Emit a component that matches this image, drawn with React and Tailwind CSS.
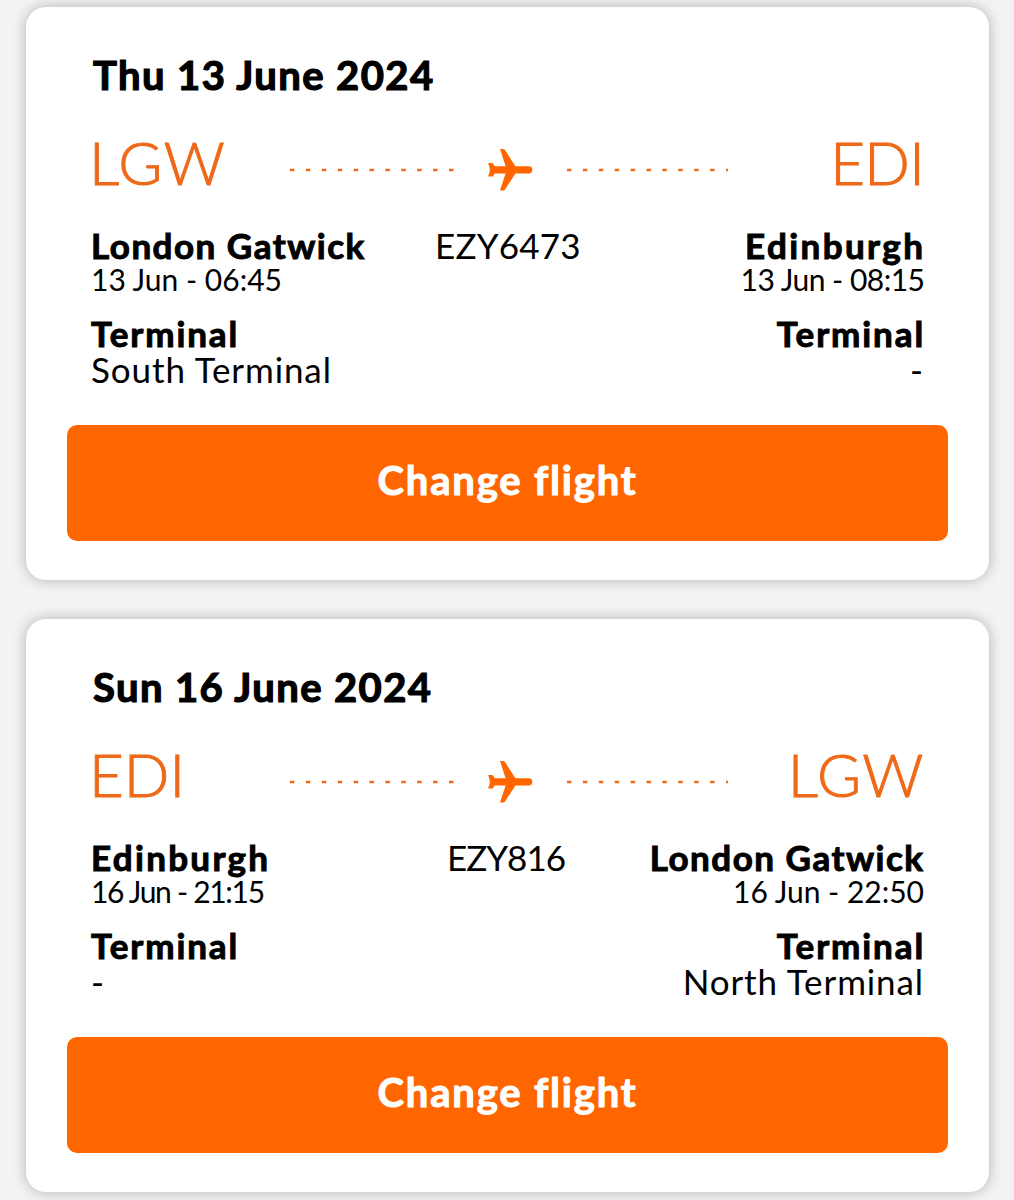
import React from 'react';

const flights = [
  {
    date: 'Thu 13 June 2024',
    number: 'EZY6473',
    numberClass: 'tracking-[0.2px]',
    from: {
      code: 'LGW',
      codeClass: 'tracking-[1.5px]',
      city: 'London Gatwick',
      cityClass: 'tracking-[1.5px] -mr-[1.5px]',
      time: '13 Jun - 06:45',
      timeClass: 'tracking-normal',
      terminal: 'South Terminal',
    },
    to: {
      code: 'EDI',
      codeClass: 'tracking-[-0.8px]',
      city: 'Edinburgh',
      cityClass: 'tracking-[2.4px] -mr-[1.4px]',
      time: '13 Jun - 08:15',
      timeClass: 'tracking-[-0.5px] -mr-[0.5px]',
      terminal: '-',
    },
  },
  {
    date: 'Sun 16 June 2024',
    number: 'EZY816',
    numberClass: 'tracking-[-1px] -ml-[3px]',
    from: {
      code: 'EDI',
      codeClass: 'tracking-normal',
      city: 'Edinburgh',
      cityClass: 'tracking-[2.3px]',
      time: '16 Jun - 21:15',
      timeClass: 'tracking-[-1.3px]',
      terminal: '-',
    },
    to: {
      code: 'LGW',
      codeClass: 'tracking-[1.3px] -mr-[0.5px]',
      city: 'London Gatwick',
      cityClass: 'tracking-[1.5px] -mr-[0.5px]',
      time: '16 Jun - 22:50',
      timeClass: 'tracking-normal',
      terminal: 'North Terminal',
    },
  },
];

function Dashes({ width }) {
  return (
    <svg width={width} height="4" viewBox={`0 0 ${width} 4`} className="shrink-0">
      <line x1="0" y1="2" x2={width} y2="2" stroke="#ee6a18" strokeWidth="2.6" strokeDasharray="4.4 11.5" />
    </svg>
  );
}

function Plane() {
  return (
    <svg width="45" height="42" viewBox="0 0 45 42" fill="#ff6600" className="mr-[34px] ml-[33px] shrink-0">
      <path d="M12 0H15.4Q16.4 0 17 1L27.4 17.2H40.7A3.6 3.6 0 0 1 40.7 24.5H27.4L17 40.6Q16.4 41.6 15.4 41.6H12L17.6 24.5H7.2C5.8 24.6 5.6 27.6 4.2 27.6H.3C.3 25.6 1.8 24.6 1.8 20.8C1.8 17 .3 16 .3 14H4.2C5.6 14 5.8 17.1 7.2 17.2H17.6Z" />
    </svg>
  );
}

function Stop({ stop, right }) {
  return (
    <div className={right ? 'text-right' : 'text-left'}>
      <p className={`text-[35px] leading-9 font-bold [-webkit-text-stroke:1px_black] ${stop.cityClass}`}>{stop.city}</p>
      <p className={`text-[30px] leading-8 ${stop.timeClass}`}>{stop.time}</p>
      <p className="-mr-[1px] mt-5 text-[35px] leading-9 font-bold tracking-[1.9px] [-webkit-text-stroke:1px_black]">Terminal</p>
      <p className="text-[35px] leading-9 tracking-[0.9px]">{stop.terminal}</p>
    </div>
  );
}

function FlightCard({ flight }) {
  return (
    <div className="h-[573px] rounded-[20px] bg-white px-[41px] pt-11 shadow-[0_0_14px_rgba(0,0,0,0.27)]">
      <div className="px-6">
        <h2 className="pl-0.5 text-[40px] leading-12 font-bold tracking-[1.4px] [-webkit-text-stroke:1.2px_black]">
          {flight.date}
        </h2>

        <div className="mt-[33px] flex h-[60px] items-center text-[60px] leading-[60px] font-light text-[#ee6a18] [-webkit-text-stroke:1px_#ee6a18]">
          <span className={`w-[199px] -indent-[2px] ${flight.from.codeClass}`}>{flight.from.code}</span>
          <div className="flex items-center pt-[15px]">
            <Dashes width={165} />
            <Plane />
            <Dashes width={161} />
          </div>
          <span className={`flex-1 text-right ${flight.to.codeClass}`}>{flight.to.code}</span>
        </div>

        <div className="mt-[35px] grid grid-cols-[1fr_145px_1fr]">
          <Stop stop={flight.from} />
          <p className={`text-center text-[35px] leading-9 whitespace-nowrap ${flight.numberClass}`}>{flight.number}</p>
          <Stop stop={flight.to} right />
        </div>
      </div>

      <button className="mt-[38px] block h-[116px] w-full rounded-[10px] bg-[#ff6600] pb-1.5 text-[40px] font-bold tracking-[1.8px] text-white [-webkit-text-stroke:1px_white]">
        Change flight
      </button>
    </div>
  );
}

export default function App() {
  return (
    <div className="flex h-[1200px] flex-col gap-[39px] overflow-hidden bg-[#f3f3f3] pt-[7px] pr-[25px] pl-[26px] font-['Lato','Open_Sans',sans-serif] text-black">
      {flights.map(f => (
        <FlightCard key={f.number} flight={f} />
      ))}
    </div>
  );
}
